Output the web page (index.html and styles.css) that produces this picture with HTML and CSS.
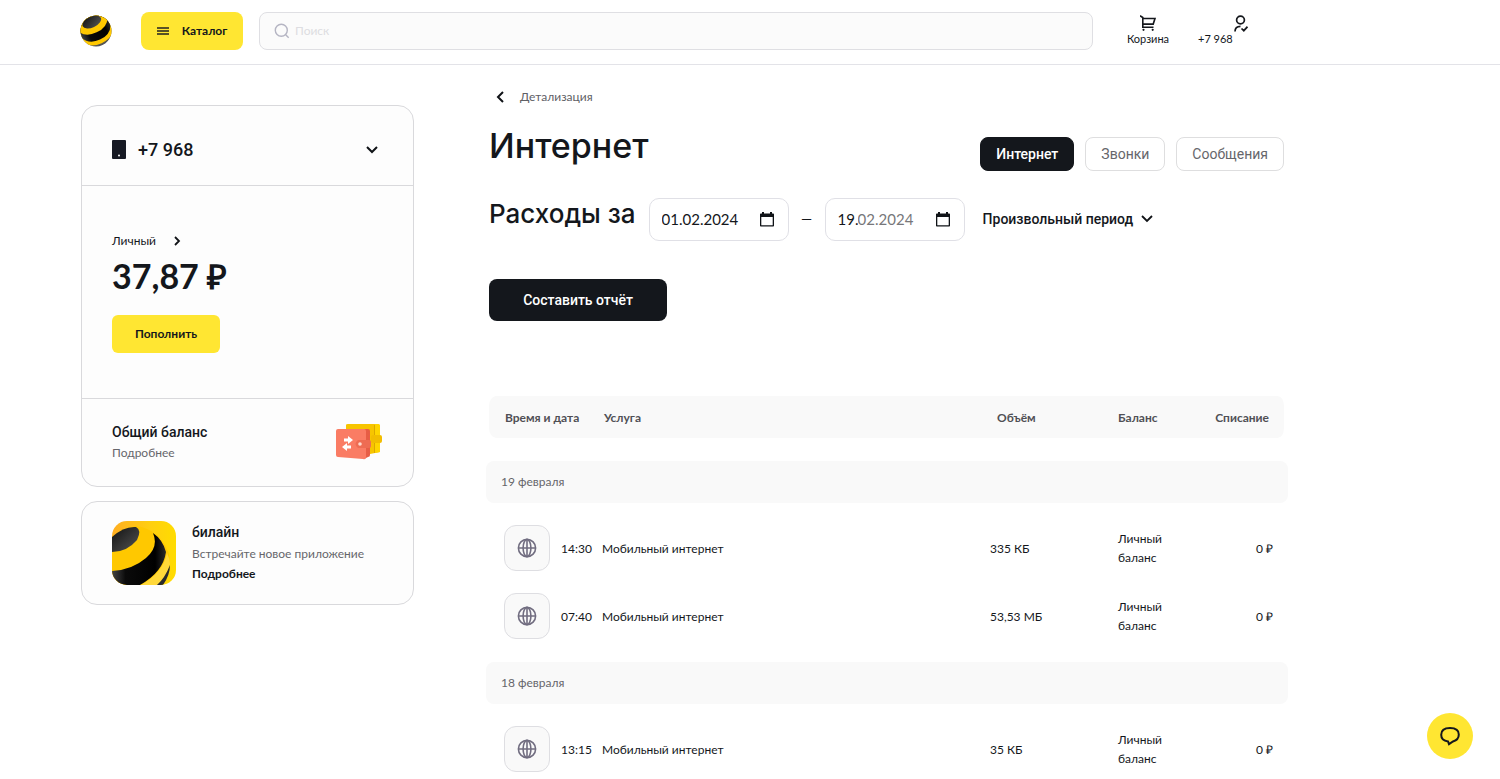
FILE: index.html
```html
<!DOCTYPE html>
<html lang="ru">
<head>
<meta charset="utf-8">
<title>Детализация — Интернет</title>
<meta name="viewport" content="width=device-width, initial-scale=1">
<link rel="stylesheet" href="styles.css">
</head>
<body>
<svg class="defs" aria-hidden="true">
  <defs>
    <clipPath id="ball"><circle cx="16" cy="16" r="15.500"/></clipPath>
    <linearGradient id="stripe" x1="0" y1="0" x2="1" y2="0"><stop offset="0" stop-color="#444"/><stop offset=".25" stop-color="#0a0a0a"/><stop offset=".8" stop-color="#000"/><stop offset="1" stop-color="#2a2a2a"/></linearGradient>
    <linearGradient id="cap" x1="0" y1="0" x2="1" y2="1"><stop offset="0" stop-color="#111"/><stop offset="1" stop-color="#555"/></linearGradient>
    <linearGradient id="tile" x1="0" y1="0" x2="1" y2="0"><stop offset="0" stop-color="#ffae22"/><stop offset=".6" stop-color="#ffcf10"/><stop offset="1" stop-color="#ffdc00"/></linearGradient>
    <symbol id="globe" viewBox="0 0 20 20"><g fill="none" stroke="#716d80" stroke-width="1.600"><circle cx="10" cy="10" r="8.600"/><ellipse cx="10" cy="10" rx="3.900" ry="8.600"/><path d="M10 1.400v17.200M1.400 10h17.200"/></g></symbol>
    <symbol id="calendar" viewBox="0 0 14 15"><path fill="#101317" fill-rule="evenodd" d="M2 0h2v1.500h6V0h2v1.500h1.200q.8 0 .8.800V13.700q0 .8-.8.800H.8q-.8 0-.8-.8V2.300q0-.8.8-.8H2zM1.300 5v8.200h11.400V5z"/></symbol>
  </defs>
</svg>

<header class="header">
  <a class="logo" href="#" aria-label="билайн">
    <svg viewBox="0 0 32 32" width="32" height="32">
      <g clip-path="url(#ball)" transform="rotate(-25 16 16)">
        <rect width="32" height="32" fill="#555"/>
        <path fill="#ffc800" d="M0 0h32v23Q26 29.500 16 29.500T0 23z"/>
        <path fill="url(#stripe)" d="M0 0h32v16Q28 25.500 16 25.500T0 16z"/>
        <path fill="#ffc800" d="M0 0h32v9Q28 17.500 16 17.500T0 9z"/>
        <ellipse cx="16" cy="6" rx="10" ry="5.500" fill="url(#cap)"/>
      </g>
    </svg>
  </a>
  <button class="catalog" type="button">
    <svg viewBox="0 0 12 8" width="12" height="8"><path d="M0 1h12M0 4h12M0 7h12" stroke="#222" stroke-width="1.500"/></svg>
    Каталог
  </button>
  <label class="search">
    <svg viewBox="0 0 16 16" width="16" height="16"><g fill="none" stroke="#b5b5c3" stroke-width="1.400"><circle cx="7.300" cy="7.300" r="6"/><path d="M11.700 11.700l3 3"/></g></svg>
    <input type="search" placeholder="Поиск" aria-label="Поиск">
  </label>
  <a class="nav-link cart" href="#">
    <svg viewBox="0 0 16 16" width="16" height="16"><g fill="none" stroke="#14171c" stroke-width="1.600"><path d="M0 .8L2.800 2.500v9.700h10.700M2.800 3.500h12.200l-1.800 5.600H2.800"/></g><circle cx="3.500" cy="14.800" r="1.100" fill="#14171c"/><circle cx="12.700" cy="14.800" r="1.100" fill="#14171c"/></svg>
    Корзина
  </a>
  <a class="nav-link account" href="#">
    <svg viewBox="0 0 14 17" width="14" height="17"><g fill="none" stroke="#14171c" stroke-width="1.700"><circle cx="6.500" cy="5" r="3.900"/><path d="M1 16.500c0-3.500 2-5.200 5.500-5.200M7.500 13.500l2.300 2.200 3.700-4"/></g></svg>
    +7 968
  </a>
</header>

<div class="layout">
  <aside class="sidebar">
    <section class="card">
      <button class="phone" type="button">
        <svg viewBox="0 0 14 19" width="14" height="19"><rect width="14" height="19" rx="1" fill="#171a24"/><circle cx="7" cy="15.500" r="1" fill="#fff"/></svg>
        <span>+7 968</span>
        <svg class="end" viewBox="0 0 12 8" width="12" height="8"><path d="M1 1l5 5 5-5" fill="none" stroke="#101317" stroke-width="2"/></svg>
      </button>
      <div class="balance">
        <a class="balance-name" href="#">Личный
          <svg viewBox="0 0 7 10" width="7" height="10"><path d="M1 1l4 4-4 4" fill="none" stroke="#101317" stroke-width="1.800"/></svg>
        </a>
        <div class="amount">37,87 ₽</div>
        <button class="topup" type="button">Пополнить</button>
      </div>
      <div class="shared">
        <div>
          <div class="title">Общий баланс</div>
          <a class="muted" href="#">Подробнее</a>
        </div>
        <svg viewBox="0 0 48 36" width="48" height="36">
          <path fill="#f7c500" d="M11 1q0-1 2-1h29q3 0 3 2v26l-10 2H11z"/><path fill="#ffd500" d="M40 0h3q2 0 2 2v26l-5 1z"/><path fill="#dca800" d="M39 1h1v28h-1z"/>
          <rect x="36" y="11" width="11" height="8" rx="2" fill="#f2bd00"/>
          <path fill="#e75d45" d="M29 5h4q2 0 2 2v24q0 2-2 2l-4 2z"/>
          <path fill="#fa7c64" d="M3 5h26q2 0 2 2v26q0 3-3 2L3 33q-2 0-2-2V7q0-2 2-2z"/>
          <path fill="#ee6c53" d="M23 16h11q2 0 2 2v4q0 2-2 2H23q-5-4 0-8z"/><circle cx="25" cy="20" r="1.800" fill="#ffd9cd"/>
          <path fill="#fff" d="M9 14.500h4v-2.500l5 4-5 4v-2.500H9zM16 21.500h-4V19l-5 4 5 4v-2.500h4z"/>
        </svg>
      </div>
    </section>
    <section class="card promo">
      <svg viewBox="0 0 64 64" width="64" height="64">
        <clipPath id="tileClip"><rect width="64" height="64" rx="15"/></clipPath>
        <g clip-path="url(#tileClip)">
          <rect width="64" height="64" fill="url(#tile)"/>
          <path fill="#ffc800" d="M0 16Q10 7 24 5q24 3 33 28 3 16-6 31H0z"/>
          <path fill="url(#stripe)" d="M41 12q10 7 13 19-3 21-28 34H8Q2 62 0 56v-6Q20 49 34 37 47 26 41 12z"/>
          <path fill="#ffd83a" d="M55 32q3 6 3 11-3 13-12 21H29Q51 52 55 32z"/>
          <path fill="#2b2b2b" d="M58 44q0 10-7 20h-6q8-7 13-20z"/>
          <path fill="url(#cap)" d="M0 16Q12 5 24 6q6 3 1 13Q15 31 0 31z"/>
        </g>
      </svg>
      <div>
        <div class="title">билайн</div>
        <div class="muted">Встречайте новое приложение</div>
        <a class="more" href="#">Подробнее</a>
      </div>
    </section>
  </aside>

  <main class="main">
    <a class="back" href="#">
      <svg viewBox="0 0 8 12" width="8" height="12"><path d="M7 1L2 6l5 5" fill="none" stroke="#101317" stroke-width="2"/></svg>
      Детализация
    </a>
    <div class="heading">
      <h1>Интернет</h1>
      <nav class="tabs">
        <button class="tab active" type="button">Интернет</button>
        <button class="tab" type="button">Звонки</button>
        <button class="tab" type="button">Сообщения</button>
      </nav>
    </div>
    <div class="period">
      <h2>Расходы за</h2>
      <div class="date">
        <input class="full" type="text" value="01.02.2024" aria-label="Начало периода">
        <button type="button" aria-label="Выбрать начало периода"><svg width="14" height="15"><use href="#calendar"/></svg></button>
      </div>
      <span class="dash">—</span>
      <div class="date">
        <input class="day" type="text" value="19." aria-label="День окончания периода">
        <input class="rest" type="text" value="02.2024" aria-label="Месяц и год окончания периода" readonly>
        <button type="button" aria-label="Выбрать конец периода"><svg width="14" height="15"><use href="#calendar"/></svg></button>
      </div>
      <button class="range" type="button">Произвольный период
        <svg viewBox="0 0 12 8" width="12" height="8"><path d="M1 1l5 5 5-5" fill="none" stroke="#101317" stroke-width="1.800"/></svg>
      </button>
    </div>
    <button class="report" type="button">Составить отчёт</button>

    <table class="usage">
      <colgroup><col class="c-time"><col><col class="c-volume"><col class="c-balance"><col class="c-charge"></colgroup>
      <thead>
        <tr><th>Время и дата</th><th>Услуга</th><th>Объём</th><th>Баланс</th><th>Списание</th></tr>
      </thead>
      <tbody>
        <tr class="group"><th colspan="5"><div>19 февраля</div></th></tr>
        <tr><td><div class="time"><span class="icon"><svg width="20" height="20"><use href="#globe"/></svg></span>14:30</div></td><td>Мобильный интернет</td><td>335 КБ</td><td>Личный<br>баланс</td><td>0 ₽</td></tr>
        <tr><td><div class="time"><span class="icon"><svg width="20" height="20"><use href="#globe"/></svg></span>07:40</div></td><td>Мобильный интернет</td><td>53,53 МБ</td><td>Личный<br>баланс</td><td>0 ₽</td></tr>
      </tbody>
      <tbody>
        <tr class="group"><th colspan="5"><div>18 февраля</div></th></tr>
        <tr><td><div class="time"><span class="icon"><svg width="20" height="20"><use href="#globe"/></svg></span>13:15</div></td><td>Мобильный интернет</td><td>35 КБ</td><td>Личный<br>баланс</td><td>0 ₽</td></tr>
      </tbody>
    </table>
  </main>
</div>

<button class="chat" type="button" aria-label="Чат">
  <svg viewBox="0 0 20 20" width="20" height="20"><path d="M8 15.500C4 15 1.200 12.500 1.200 8.800 1.200 4.500 4.500 2 10 2s8.800 2.500 8.800 6.500c0 3.500-2.300 6-5.800 7L9 18.200z" fill="none" stroke="#14171c" stroke-width="2"/></svg>
</button>
</body>
</html>
```

FILE: styles.css
```css
* { box-sizing: border-box; }
body {
  margin: 0;
  background: #fff;
  color: #14171c;
  font: 12px/20px Lato, "Open Sans", sans-serif;
}
a { color: inherit; text-decoration: none; }
button, input { font: inherit; color: inherit; border: 0; padding: 0; background: none; }
button { cursor: pointer; }
svg { display: block; flex: none; }
.defs { position: absolute; width: 0; height: 0; }

.header {
  display: flex;
  align-items: center;
  padding: 12px 250px 14px 80px;
  border-bottom: 1px solid #e3e3e8;
}
.logo { margin-right: 29px; }
.catalog {
  display: flex;
  align-items: center;
  justify-content: center;
  gap: 13px;
  width: 102px;
  height: 38px;
  margin-right: 16px;
  border-radius: 8px;
  background: #ffe632;
  font-weight: 700;
}
.search {
  display: flex;
  flex: 1;
  align-items: center;
  gap: 5px;
  height: 38px;
  padding: 0 14px;
  border: 1px solid #dfdfe3;
  border-radius: 8px;
  background: #fbfbfb;
}
.search input { flex: 1; min-width: 0; outline: 0; }
.search input::placeholder { color: #dddde1; opacity: 1; }
.nav-link { display: flex; flex-direction: column; padding-bottom: 2px; font-size: 11px; line-height: 14px; }
.cart { align-items: center; gap: 1px; width: 42px; margin: 0 29px 0 34px; }
.account { width: 50px; margin-right: 2px; }
.account svg { align-self: flex-end; }

.layout {
  display: grid;
  grid-template-columns: 333px minmax(0, 1fr);
  gap: 75px;
  padding: 0 216px 0 81px;
}
.sidebar { display: flex; flex-direction: column; gap: 14px; padding-top: 40px; }
.card { border: 1px solid #d9d9dc; border-radius: 16px; background: #fdfdfd; }
.phone {
  display: flex;
  align-items: center;
  gap: 12px;
  width: 100%;
  height: 80px;
  padding: 8px 35px 0 30px;
  border-bottom: 1px solid #d9d9dc;
  font: 500 18px/24px Roboto, sans-serif;
}
.end { margin-left: auto; }
.balance { padding: 45px 30px; border-bottom: 1px solid #d9d9dc; }
.balance-name { display: inline-flex; align-items: center; gap: 18px; }
.amount { margin: 3px 0 17px; font-size: 34px; line-height: 44px; font-weight: 700; }
.topup { display: block; width: 108px; height: 38px; border-radius: 6px; background: #ffe632; font-weight: 700; }
.shared { display: flex; align-items: center; justify-content: space-between; height: 87px; padding: 0 30px 2px; }
.title { font: 500 14px/22px Roboto, sans-serif; }
.muted { color: #66666b; }
.promo { display: flex; align-items: center; gap: 16px; height: 104px; padding: 0 30px; }
.promo .title { padding-bottom: 2px; line-height: 20px; }
.more { font-weight: 700; }

.main { padding-top: 22px; }
.back { display: flex; align-items: center; gap: 16px; padding-left: 7px; color: #606065; }
h1, h2 { margin: 0; font-family: Inter, sans-serif; font-weight: 500; }
h1 { font-size: 34px; line-height: 44px; }
h2 { font-size: 26px; line-height: 34px; }
.heading { display: flex; justify-content: space-between; align-items: flex-start; padding-top: 17px; }
.tabs { display: flex; gap: 11px; padding-top: 13px; }
.tab {
  height: 34px;
  padding: 0 15px;
  border: 1px solid #dededf;
  border-radius: 8px;
  color: #66666b;
  font: 14px/20px Roboto, sans-serif;
}
.tab.active { border-color: #14171c; background: #14171c; color: #fff; font-weight: 500; }
.period { display: flex; align-items: center; padding-top: 26px; }
.period h2 { margin-right: 13px; padding-bottom: 10px; white-space: nowrap; }
.date {
  display: flex;
  align-items: center;
  width: 140px;
  height: 43px;
  padding: 0 14px 0 12px;
  border: 1px solid #e0e0e6;
  border-radius: 10px;
  font-size: 15px;
}
.date button { margin-left: auto; }
.full { width: 84px; }
.day { width: 20px; }
.rest { width: 60px; color: #77777a; }
.dash { width: 36px; text-align: center; font-size: 14px; }
.range { display: flex; align-items: center; gap: 8px; margin-left: 18px; font: 500 14px/20px Roboto, sans-serif; white-space: nowrap; }
.report {
  display: block;
  width: 178px;
  height: 42px;
  margin-top: 38px;
  border-radius: 8px;
  background: #14171c;
  color: #fff;
  font: 500 14px/20px Roboto, sans-serif;
}

.usage {
  width: calc(100% + 7px);
  margin: 75px -4px 0 -3px;
  border-spacing: 0;
  table-layout: fixed;
  line-height: 19px;
}
.c-time { width: 116px; }
.c-volume { width: 128px; }
.c-balance { width: 80px; }
.c-charge { width: 90px; }
th, td { padding: 0; text-align: left; font-weight: 400; }
thead th {
  height: 42px;
  background: #f9f9f9;
  background-clip: padding-box;
  color: #505055;
  font-weight: 700;
}
thead th:first-child { padding-left: 16px; border-left: 3px solid transparent; border-radius: 10px 0 0 10px; white-space: nowrap; }
thead th:nth-child(2) { padding-left: 2px; }
thead th:nth-child(3) { padding-left: 7px; }
thead th:last-child { padding-right: 15px; border-right: 4px solid transparent; border-radius: 0 10px 10px 0; text-align: right; }
.group th { padding: 12px 0 11px; }
thead + tbody .group th { padding-top: 23px; }
.group div { padding: 11px 15px; border-radius: 8px; background: #f9f9f9; color: #66666b; line-height: 20px; }
td { height: 68px; }
td:last-child { padding-right: 15px; text-align: right; }
.time { display: flex; align-items: center; gap: 11px; padding-left: 18px; }
.icon {
  display: grid;
  place-items: center;
  width: 46px;
  height: 46px;
  border: 1px solid #dedee2;
  border-radius: 12px;
  background: #f9f9f9;
}

.chat {
  position: fixed;
  right: 27px;
  bottom: 20px;
  display: grid;
  place-items: center;
  width: 46px;
  height: 46px;
  border-radius: 50%;
  background: #ffe632;
}
```
